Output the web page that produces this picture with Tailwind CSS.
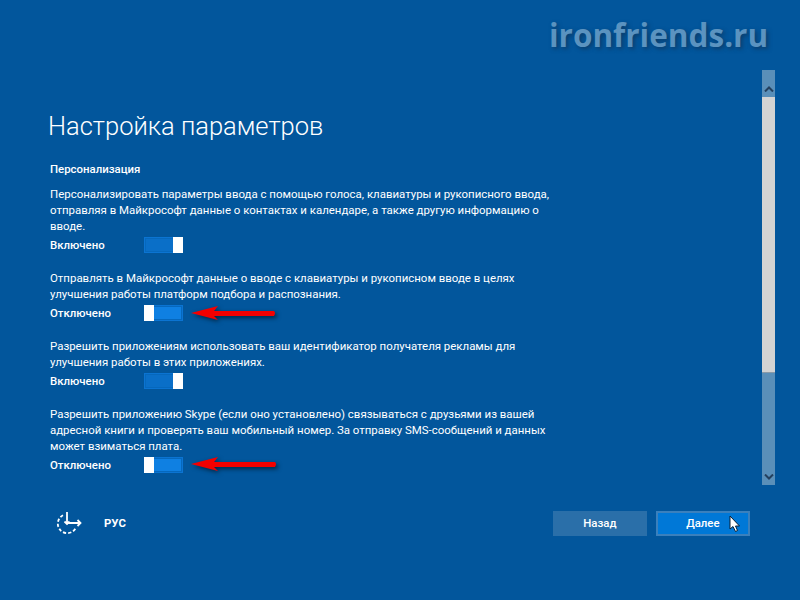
<!DOCTYPE html>
<html lang="ru">
<head>
    <meta charset="UTF-8">
    <title>Настройка параметров</title>
    <script src="https://cdn.jsdelivr.net/npm/@tailwindcss/browser@4"></script>
</head>
<body class="bg-[#02569c] text-white font-['Roboto',sans-serif]">
    <div class="relative w-[800px] h-[600px] overflow-hidden flex flex-col">
        <!-- watermark -->
        <div class="absolute left-[549px] top-[15px] font-['Open_Sans',sans-serif] text-[31.5px] leading-[40px] font-bold text-[#5b93c0] [text-shadow:2px_2px_4px_#0b3d6b]">ironfriends.ru</div>

        <div class="flex h-[485px] pt-[70px]">
            <!-- settings text -->
            <div class="w-[762px] pl-[50px]">
                <h1 class="text-[25.5px] leading-[36px] font-light -ml-[2px] mt-[38px]">Настройка параметров</h1>
                <h2 class="text-[11.4px] leading-[16px] font-medium mt-[17px]">Персонализация</h2>

                <p class="text-[11.45px] leading-[16px] w-[510px] mt-[9px]">Персонализировать параметры ввода с помощью голоса, клавиатуры и рукописного ввода, отправляя в Майкрософт данные о контактах и календаре, а также другую информацию о вводе.</p>
                <div class="flex items-center h-[16px] mt-[3px]">
                    <span class="w-[94px] mt-[2px] text-[11.4px] font-medium">Включено</span>
                    <div class="w-[39px] h-[16px] border border-[#0b74d2] bg-[#0668bd] p-[1px] flex justify-end"><div class="flex-1 bg-[#0a6fc8]"></div><div class="w-[10px] -my-[2px] -mr-[2px] bg-white"></div></div>
                </div>

                <p class="text-[11.45px] leading-[16px] w-[510px] mt-[17px]">Отправлять в Майкрософт данные о вводе с клавиатуры и рукописном вводе в целях улучшения работы платформ подбора и распознания.</p>
                <div class="flex items-center h-[16px] mt-[3px]">
                    <span class="w-[94px] mt-[2px] text-[11.4px] font-medium">Отключено</span>
                    <div class="w-[39px] h-[16px] border border-[#0b74d2] bg-[#0668bd] p-[1px] flex"><div class="w-[10px] -my-[2px] -ml-[2px] bg-white"></div><div class="flex-1 bg-[#0f80e2]"></div></div>
                </div>

                <p class="text-[11.45px] leading-[16px] w-[510px] mt-[17px]">Разрешить приложениям использовать ваш идентификатор получателя рекламы для улучшения работы в этих приложениях.</p>
                <div class="flex items-center h-[16px] mt-[3px]">
                    <span class="w-[94px] mt-[2px] text-[11.4px] font-medium">Включено</span>
                    <div class="w-[39px] h-[16px] border border-[#0b74d2] bg-[#0668bd] p-[1px] flex justify-end"><div class="flex-1 bg-[#0a6fc8]"></div><div class="w-[10px] -my-[2px] -mr-[2px] bg-white"></div></div>
                </div>

                <p class="text-[11.45px] leading-[16px] w-[510px] mt-[17px]">Разрешить приложению Skype (если оно установлено) связываться с друзьями из вашей адресной книги и проверять ваш мобильный номер. За отправку SMS-сообщений и данных может взиматься плата.</p>
                <div class="flex items-center h-[16px] mt-[3px]">
                    <span class="w-[94px] mt-[2px] text-[11.4px] font-medium">Отключено</span>
                    <div class="w-[39px] h-[16px] border border-[#0b74d2] bg-[#0668bd] p-[1px] flex"><div class="w-[10px] -my-[2px] -ml-[2px] bg-white"></div><div class="flex-1 bg-[#0f80e2]"></div></div>
                </div>
            </div>

            <!-- scrollbar -->
            <div class="w-[13px] h-[415px] bg-[#5a8fb9] flex flex-col">
                <div class="h-[27px] flex items-end justify-center pb-[5px]">
                    <svg width="10" height="6" viewBox="0 0 10 6"><path d="M1 5.5 L5 1.5 L9 5.5" fill="none" stroke="#24405e" stroke-width="2"/></svg>
                </div>
                <div class="h-[276px] bg-[#d3d3d3] border-b border-[#8a9aa8]"></div>
                <div class="flex-1 flex items-end justify-center pb-[5px]">
                    <svg width="10" height="6" viewBox="0 0 10 6"><path d="M1 .5 L5 4.5 L9 .5" fill="none" stroke="#24405e" stroke-width="2"/></svg>
                </div>
            </div>
        </div>

        <!-- bottom bar -->
        <div class="flex items-center h-[25px] mt-[26px]">
            <svg class="ml-[55px]" width="27" height="25" viewBox="0 0 27 25" fill="none" stroke="#fff" stroke-width="1.8">
                <path d="M8 4.2 A9.5 9.5 0 1 0 21 16.5" stroke-dasharray="3.2 2"/>
                <path d="M12 1 V13 M9.5 10.5 L12 13 L14.5 10.5 M12 12 H25.5 M22.5 9 L25.5 12 L22.5 15"/>
            </svg>
            <span class="ml-[22px] mt-[1px] text-[11.4px] font-bold">РУС</span>
            <button class="ml-[427px] w-[94px] h-[25px] bg-[#2a6fa9] text-[11.4px] font-medium">Назад</button>
            <button class="ml-[9px] w-[94px] h-[25px] bg-[#0078d7] border-2 border-[#3a80bd] text-[11.4px] font-medium">Далее</button>
        </div>

        <!-- red arrows -->
        <svg class="absolute left-[190px] top-[304px] drop-shadow-[2px_2px_2px_rgba(0,0,0,0.55)]" width="90" height="18" viewBox="0 0 90 18">
            <path d="M1 9 L28 2 L24 7 H84 Q86 9 84 12 H24 L28 16 Z" fill="#f40000"/>
        </svg>
        <svg class="absolute left-[190px] top-[455px] drop-shadow-[2px_2px_2px_rgba(0,0,0,0.55)]" width="90" height="18" viewBox="0 0 90 18">
            <path d="M1 9 L28 2 L24 7 H85 Q87 9 85 12 H24 L28 16 Z" fill="#f40000"/>
        </svg>

        <!-- mouse pointer -->
        <svg class="absolute left-[729px] top-[515px]" width="12" height="18" viewBox="0 0 12 18">
            <path d="M1 1 V14 L4 11.5 L6.5 16.5 L8.5 15.5 L6.5 11 H10.5 Z" fill="#fff" stroke="#0b1f33" stroke-width="1"/>
        </svg>
    </div>
</body>
</html>
